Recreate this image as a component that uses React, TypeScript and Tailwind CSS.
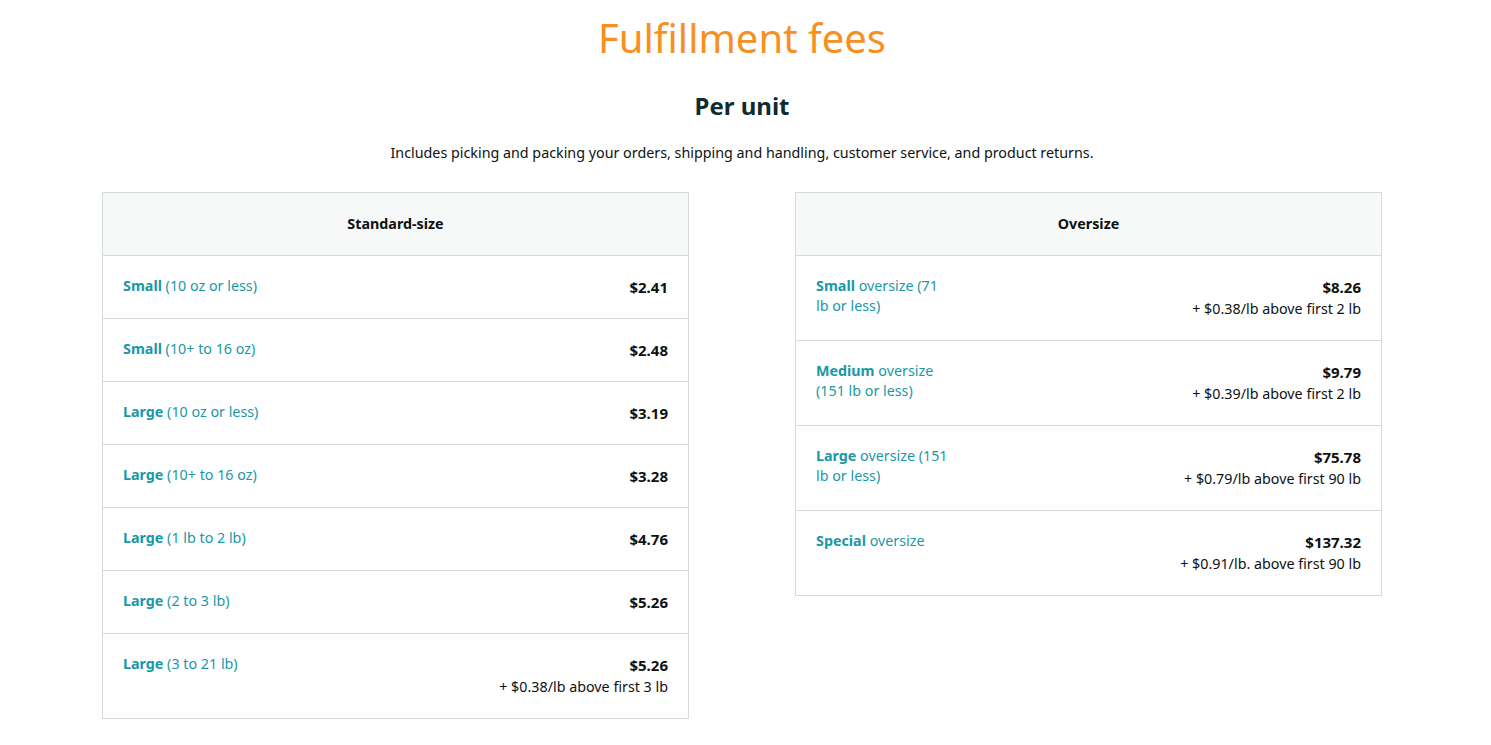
const font = { fontFamily: '"Noto Sans", "Open Sans", Arial, sans-serif' }

type Row = {
  bold: string
  rest: React.ReactNode
  price: string
  extra?: string
}

const standard: Row[] = [
  { bold: 'Small', rest: ' (10 oz or less)', price: '$2.41' },
  { bold: 'Small', rest: ' (10+ to 16 oz)', price: '$2.48' },
  { bold: 'Large', rest: ' (10 oz or less)', price: '$3.19' },
  { bold: 'Large', rest: ' (10+ to 16 oz)', price: '$3.28' },
  { bold: 'Large', rest: ' (1 lb to 2 lb)', price: '$4.76' },
  { bold: 'Large', rest: ' (2 to 3 lb)', price: '$5.26' },
  { bold: 'Large', rest: ' (3 to 21 lb)', price: '$5.26', extra: '+ $0.38/lb above first 3 lb' },
]

const oversize: Row[] = [
  {
    bold: 'Small',
    rest: (
      <>
        {' '}oversize (71
        <br />
        lb or less)
      </>
    ),
    price: '$8.26',
    extra: '+ $0.38/lb above first 2 lb',
  },
  {
    bold: 'Medium',
    rest: (
      <>
        {' '}oversize
        <br />
        (151 lb or less)
      </>
    ),
    price: '$9.79',
    extra: '+ $0.39/lb above first 2 lb',
  },
  {
    bold: 'Large',
    rest: (
      <>
        {' '}oversize (151
        <br />
        lb or less)
      </>
    ),
    price: '$75.78',
    extra: '+ $0.79/lb above first 90 lb',
  },
  { bold: 'Special', rest: ' oversize', price: '$137.32', extra: '+ $0.91/lb. above first 90 lb' },
]

function FeeTable({ title, rows }: { title: string; rows: Row[] }) {
  return (
    <div className="w-[587px] border border-[#d5dbdb] bg-white">
      <div className="flex h-[63px] items-center justify-center border-b border-[#d5dbdb] bg-[#f7f8f8] text-[14.3px] font-bold text-[#0f1111]">
        {title}
      </div>
      {rows.map((r, i) => (
        <div
          key={i}
          className={`flex items-start justify-between px-5 py-5 ${i < rows.length - 1 ? 'border-b border-[#d5dbdb]' : ''}`}
        >
          <div className="text-[14.3px] leading-[20px] text-[#1a98a6]">
            <span className="font-bold">{r.bold}</span>
            {r.rest}
          </div>
          <div className="text-right">
            <div className="text-[15px] font-bold leading-[22px] text-[#0f1111]">{r.price}</div>
            {r.extra && <div className="text-[14.3px] leading-[22px] text-[#0f1111]">{r.extra}</div>}
          </div>
        </div>
      ))}
    </div>
  )
}

export default function App() {
  return (
    <div className="min-h-screen w-[1484px] bg-white pb-10" style={font}>
      <h1 className="pt-[12px] text-center text-[40px] leading-[52px] text-[#f7901e]">Fulfillment fees</h1>

      {/* Per unit -=-=-=-=-=-=-=-=- */}
      <h2 className="mt-[26px] text-center text-[24px] font-bold leading-[32px] text-[#0f2a30]">Per unit</h2>
      <p className="mt-[21px] text-center text-[14.3px] leading-[20px] text-[#0f1111]">
        Includes picking and packing your orders, shipping and handling, customer service, and product returns.
      </p>

      <div className="mt-[29px] flex items-start justify-center gap-[106px]">
        <FeeTable title="Standard-size" rows={standard} />
        <FeeTable title="Oversize" rows={oversize} />
      </div>
    </div>
  )
}
